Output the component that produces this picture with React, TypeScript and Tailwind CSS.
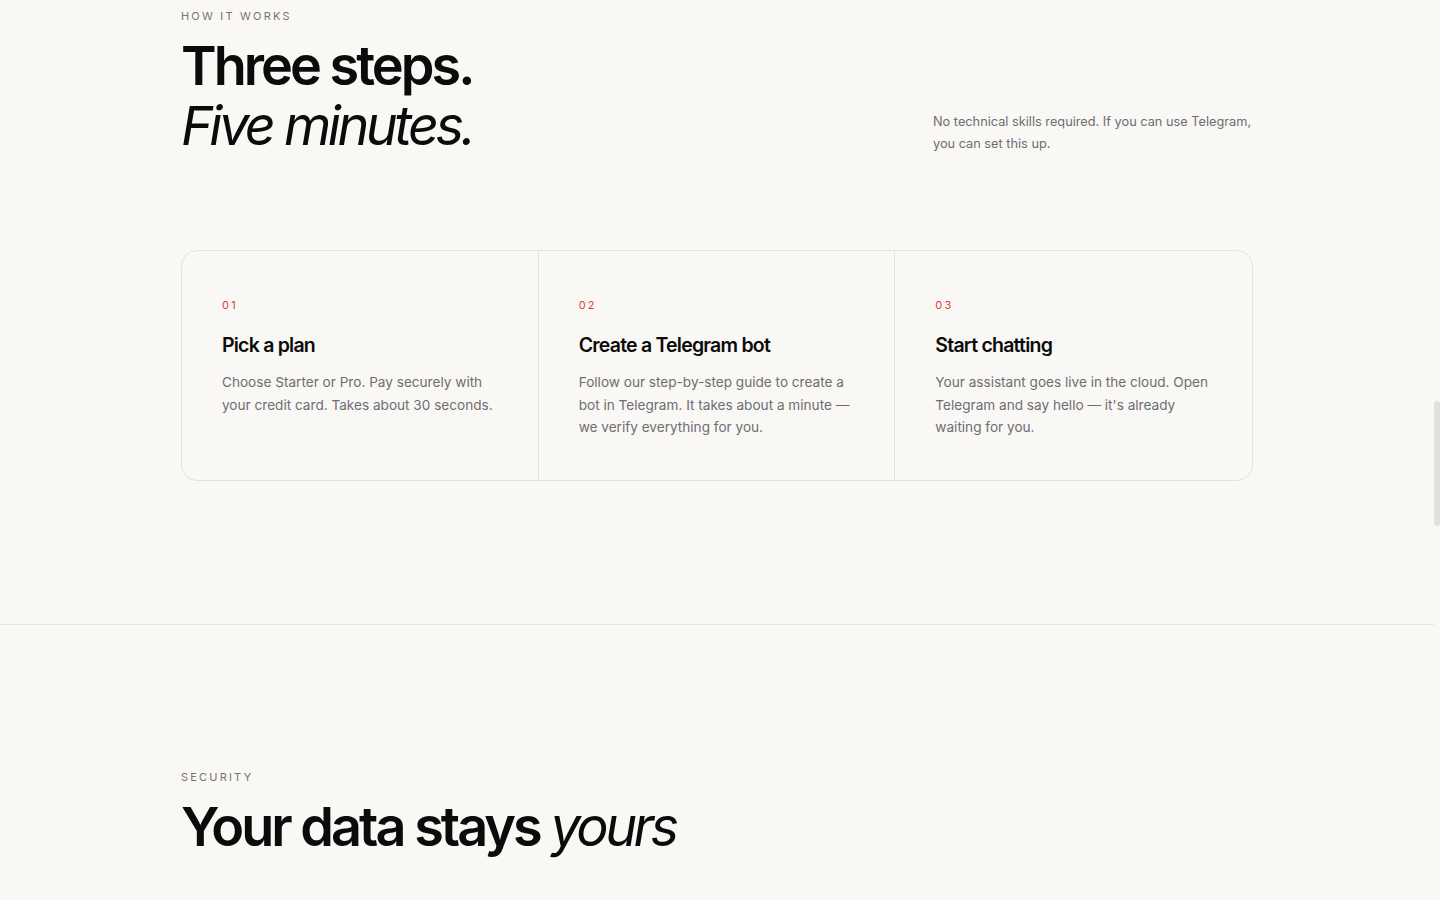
const steps = [
  {
    num: '01',
    title: 'Pick a plan',
    body: 'Choose Starter or Pro. Pay securely with your credit card. Takes about 30 seconds.',
  },
  {
    num: '02',
    title: 'Create a Telegram bot',
    body: 'Follow our step-by-step guide to create a bot in Telegram. It takes about a minute \u2014 we verify everything for you.',
  },
  {
    num: '03',
    title: 'Start chatting',
    body: "Your assistant goes live in the cloud. Open Telegram and say hello \u2014 it's already waiting for you.",
  },
];

function Eyebrow({ children }: { children: React.ReactNode }) {
  return (
    <p className="text-[11px] leading-4 uppercase tracking-[0.2em] text-[#76746f]">{children}</p>
  );
}

export default function App() {
  return (
    <div
      className="flex h-screen overflow-hidden bg-[#f9f8f5] text-[#0b0b0b] antialiased"
      style={{ fontFamily: 'Inter, "Noto Sans", sans-serif' }}
    >
      <main className="flex-1 min-w-0">
        {/* How it works */}
        <section className="pt-[8px] pb-[143px] border-b border-[#e6e4e1]">
          <div className="max-w-6xl mx-auto px-10">
            <div className="flex items-end justify-between gap-10">
              <div>
                <Eyebrow>How it works</Eyebrow>
                <h2 className="mt-3 text-[54px] leading-[60px] font-semibold tracking-[-0.055em]">
                  Three steps.
                  <br />
                  <span className="italic font-normal tracking-[-0.065em]">Five minutes.</span>
                </h2>
              </div>
              <p className="max-w-[320px] mb-[1px] text-[12.75px] leading-[22px] text-[#6e6d73]">
                No technical skills required. If you can use Telegram, you can set this up.
              </p>
            </div>

            <div className="mt-[94px] grid grid-cols-3 rounded-2xl border border-[#e4e2df] divide-x divide-[#e4e2df]">
              {steps.map((s) => (
                <div key={s.num} className="px-10 pt-[46px] pb-[41px]">
                  <p className="text-[11px] leading-4 tracking-[0.2em] text-[#e5383b]">{s.num}</p>
                  <h3 className="mt-[18px] text-[19.5px] leading-7 font-semibold tracking-[-0.04em]">{s.title}</h3>
                  <p className="mt-3 text-[13.6px] leading-[22.5px] text-[#6e6d73]">{s.body}</p>
                </div>
              ))}
            </div>
          </div>
        </section>

        {/* Security */}
        <section className="pt-36 pb-36">
          <div className="max-w-6xl mx-auto px-10">
            <Eyebrow>Security</Eyebrow>
            <h2 className="mt-3 text-[54px] leading-[60px] font-semibold tracking-[-0.055em]">
              Your data stays <span className="italic font-normal tracking-[-0.065em]">yours</span>
            </h2>
          </div>
        </section>
      </main>

      {/* scrollbar */}
      <aside className="w-[6px] shrink-0">
        <div className="mt-[401px] h-[125px] rounded-full bg-[#e1e0de]" />
      </aside>
    </div>
  );
}
